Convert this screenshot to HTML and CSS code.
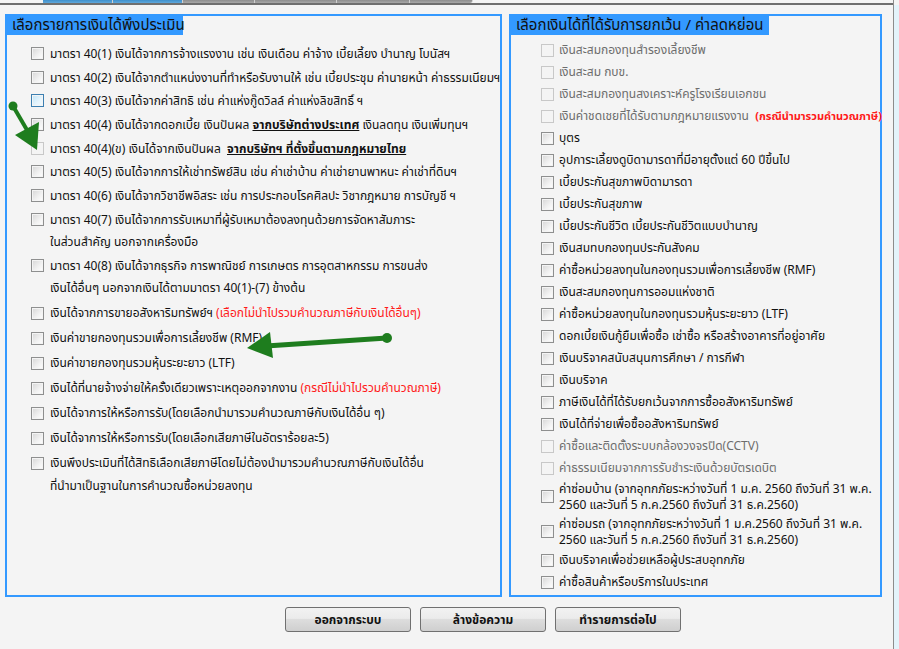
FILE: index.html
```html
<!DOCTYPE html>
<html lang="th">
<head>
<meta charset="utf-8">
<title>เลือกรายการเงินได้</title>
<link rel="stylesheet" href="styles.css">
</head>
<body>
<div class="main">
  <div class="tabbar">
    <span class="tab tab-blue"></span><span class="tab tab-blue"></span>
    <span class="tab tab-gray t1"></span><span class="tab tab-gray t2"></span><span class="tab tab-gray t3"></span><span class="tab tab-gray t4"></span>
  </div>
  <div class="tabline"></div>
  <div class="content">
    <div class="panels">
      <section class="panel panel-left">
        <div class="legend legend-left">เลือกรายการเงินได้พึงประเมิน</div>
        <ul class="list list-left">
          <li class="row"><input type="checkbox" class="cb"><span class="txt">มาตรา 40(1) เงินได้จากการจ้างแรงงาน เช่น เงินเดือน ค่าจ้าง เบี้ยเลี้ยง บำนาญ โบนัสฯ</span></li>
          <li class="row"><input type="checkbox" class="cb"><span class="txt">มาตรา 40(2) เงินได้จากตำแหน่งงานที่ทำหรือรับงานให้ เช่น เบี้ยประชุม ค่านายหน้า ค่าธรรมเนียมฯ</span></li>
          <li class="row"><input type="checkbox" class="cb cb-hover"><span class="txt">มาตรา 40(3) เงินได้จากค่าสิทธิ เช่น ค่าแห่งกู๊ดวิลล์ ค่าแห่งลิขสิทธิ์ ฯ</span></li>
          <li class="row"><input type="checkbox" class="cb"><span class="txt">มาตรา 40(4) เงินได้จากดอกเบี้ย เงินปันผล <b class="em">จากบริษัทต่างประเทศ</b> เงินลดทุน เงินเพิ่มทุนฯ</span></li>
          <li class="row"><input type="checkbox" class="cb cb-dis"><span class="txt">มาตรา 40(4)(ข) เงินได้จากเงินปันผล&nbsp; <b class="em">จากบริษัทฯ ที่ตั้งขึ้นตามกฎหมายไทย</b></span></li>
          <li class="row"><input type="checkbox" class="cb"><span class="txt">มาตรา 40(5) เงินได้จากการให้เช่าทรัพย์สิน เช่น ค่าเช่าบ้าน ค่าเช่ายานพาหนะ ค่าเช่าที่ดินฯ</span></li>
          <li class="row"><input type="checkbox" class="cb"><span class="txt">มาตรา 40(6) เงินได้จากวิชาชีพอิสระ เช่น การประกอบโรคศิลปะ วิชากฎหมาย การบัญชี ฯ</span></li>
          <li class="row"><input type="checkbox" class="cb"><span class="txt">มาตรา 40(7) เงินได้จากการรับเหมาที่ผู้รับเหมาต้องลงทุนด้วยการจัดหาสัมภาระ<br>ในส่วนสำคัญ นอกจากเครื่องมือ</span></li>
          <li class="row"><input type="checkbox" class="cb"><span class="txt">มาตรา 40(8) เงินได้จากธุรกิจ การพาณิชย์ การเกษตร การอุตสาหกรรม การขนส่ง<br>เงินได้อื่นๆ นอกจากเงินได้ตามมาตรา 40(1)-(7) ข้างต้น</span></li>
        </ul>
        <ul class="list list-left2">
          <li class="row"><input type="checkbox" class="cb"><span class="txt">เงินได้จากการขายอสังหาริมทรัพย์ฯ <span class="red">(เลือกไม่นำไปรวมคำนวณภาษีกับเงินได้อื่นๆ)</span></span></li>
          <li class="row"><input type="checkbox" class="cb"><span class="txt">เงินค่าขายกองทุนรวมเพื่อการเลี้ยงชีพ (RMF)</span></li>
          <li class="row"><input type="checkbox" class="cb"><span class="txt">เงินค่าขายกองทุนรวมหุ้นระยะยาว (LTF)</span></li>
          <li class="row"><input type="checkbox" class="cb"><span class="txt">เงินได้ที่นายจ้างจ่ายให้ครั้งเดียวเพราะเหตุออกจากงาน <span class="red">(กรณีไม่นำไปรวมคำนวณภาษี)</span></span></li>
          <li class="row"><input type="checkbox" class="cb"><span class="txt">เงินได้จาการให้หรือการรับ(โดยเลือกนำมารวมคำนวณภาษีกับเงินได้อื่น ๆ)</span></li>
          <li class="row"><input type="checkbox" class="cb"><span class="txt">เงินได้จาการให้หรือการรับ(โดยเลือกเสียภาษีในอัตราร้อยละ5)</span></li>
          <li class="row"><input type="checkbox" class="cb"><span class="txt">เงินพึงประเมินที่ได้สิทธิเลือกเสียภาษีโดยไม่ต้องนำมารวมคำนวณภาษีกับเงินได้อื่น<br>ที่นำมาเป็นฐานในการคำนวณซื้อหน่วยลงทุน</span></li>
        </ul>
      </section>
      <section class="panel panel-right">
        <div class="legend legend-right">เลือกเงินได้ที่ได้รับการยกเว้น / ค่าลดหย่อน</div>
        <ul class="list list-right">
          <li class="rrow dis"><input type="checkbox" class="cb cb-dis" disabled><span class="txt">เงินสะสมกองทุนสำรองเลี้ยงชีพ</span></li>
          <li class="rrow dis"><input type="checkbox" class="cb cb-dis" disabled><span class="txt">เงินสะสม กบข.</span></li>
          <li class="rrow dis"><input type="checkbox" class="cb cb-dis" disabled><span class="txt">เงินสะสมกองทุนสงเคราะห์ครูโรงเรียนเอกชน</span></li>
          <li class="rrow dis"><input type="checkbox" class="cb cb-dis" disabled><span class="txt">เงินค่าชดเชยที่ได้รับตามกฎหมายแรงงาน&nbsp; <span class="red strong">(กรณีนำมารวมคำนวณภาษี)</span></span></li>
          <li class="rrow"><input type="checkbox" class="cb"><span class="txt">บุตร</span></li>
          <li class="rrow"><input type="checkbox" class="cb"><span class="txt">อุปการะเลี้ยงดูบิดามารดาที่มีอายุตั้งแต่ 60 ปีขึ้นไป</span></li>
          <li class="rrow"><input type="checkbox" class="cb"><span class="txt">เบี้ยประกันสุขภาพบิดามารดา</span></li>
          <li class="rrow"><input type="checkbox" class="cb"><span class="txt">เบี้ยประกันสุขภาพ</span></li>
          <li class="rrow"><input type="checkbox" class="cb"><span class="txt">เบี้ยประกันชีวิต เบี้ยประกันชีวิตแบบบำนาญ</span></li>
          <li class="rrow"><input type="checkbox" class="cb"><span class="txt">เงินสมทบกองทุนประกันสังคม</span></li>
          <li class="rrow"><input type="checkbox" class="cb"><span class="txt">ค่าซื้อหน่วยลงทุนในกองทุนรวมเพื่อการเลี้ยงชีพ (RMF)</span></li>
          <li class="rrow"><input type="checkbox" class="cb"><span class="txt">เงินสะสมกองทุนการออมแห่งชาติ</span></li>
          <li class="rrow"><input type="checkbox" class="cb"><span class="txt">ค่าซื้อหน่วยลงทุนในกองทุนรวมหุ้นระยะยาว (LTF)</span></li>
          <li class="rrow"><input type="checkbox" class="cb"><span class="txt">ดอกเบี้ยเงินกู้ยืมเพื่อซื้อ เช่าซื้อ หรือสร้างอาคารที่อยู่อาศัย</span></li>
          <li class="rrow"><input type="checkbox" class="cb"><span class="txt">เงินบริจาคสนับสนุนการศึกษา / การกีฬา</span></li>
          <li class="rrow"><input type="checkbox" class="cb"><span class="txt">เงินบริจาค</span></li>
          <li class="rrow"><input type="checkbox" class="cb"><span class="txt">ภาษีเงินได้ที่ได้รับยกเว้นจากการซื้ออสังหาริมทรัพย์</span></li>
          <li class="rrow"><input type="checkbox" class="cb"><span class="txt">เงินได้ที่จ่ายเพื่อซื้ออสังหาริมทรัพย์</span></li>
          <li class="rrow dis"><input type="checkbox" class="cb cb-dis" disabled><span class="txt">ค่าซื้อและติดตั้งระบบกล้องวงจรปิด(CCTV)</span></li>
          <li class="rrow dis"><input type="checkbox" class="cb cb-dis" disabled><span class="txt">ค่าธรรมเนียมจากการรับชำระเงินด้วยบัตรเดบิต</span></li>
          <li class="rrow two"><input type="checkbox" class="cb"><span class="txt">ค่าซ่อมบ้าน (จากอุทกภัยระหว่างวันที่ 1 ม.ค. 2560 ถึงวันที่ 31 พ.ค.<br>2560 และวันที่ 5 ก.ค.2560 ถึงวันที่ 31 ธ.ค.2560)</span></li>
          <li class="rrow two"><input type="checkbox" class="cb"><span class="txt">ค่าซ่อมรถ (จากอุทกภัยระหว่างวันที่ 1 ม.ค.2560 ถึงวันที่ 31 พ.ค.<br>2560 และวันที่ 5 ก.ค.2560 ถึงวันที่ 31 ธ.ค.2560)</span></li>
          <li class="rrow"><input type="checkbox" class="cb"><span class="txt">เงินบริจาคเพื่อช่วยเหลือผู้ประสบอุทกภัย</span></li>
          <li class="rrow"><input type="checkbox" class="cb"><span class="txt">ค่าซื้อสินค้าหรือบริการในประเทศ</span></li>
        </ul>
      </section>
    </div>
    <div class="buttons">
      <button class="btn">ออกจากระบบ</button>
      <button class="btn">ล้างข้อความ</button>
      <button class="btn">ทำรายการต่อไป</button>
    </div>
  </div>
</div>
<div class="side"></div>

<svg class="arrows" width="899" height="649" viewBox="0 0 899 649" aria-hidden="true">
  <g fill="#1e7d1e" stroke="#1e7d1e">
    <circle cx="13" cy="106" r="4.5" stroke="none"/>
    <line x1="13" y1="106" x2="27" y2="130" stroke-width="4"/>
    <polygon points="15,135 39,122 37,150" stroke="none"/>
    <circle cx="387" cy="338" r="5" stroke="none"/>
    <line x1="387" y1="338" x2="266" y2="346" stroke-width="5"/>
    <polygon points="270,332 273,358 247,348" stroke="none"/>
  </g>
</svg>
</body>
</html>
```

FILE: styles.css
```css
* { box-sizing: border-box; }
html, body { margin: 0; padding: 0; }
body {
  width: 899px;
  height: 649px;
  overflow: hidden;
  display: flex;
  background: #f4f4f4;
  font-family: Tahoma, "Noto Sans Thai", "Noto Sans Thai UI", "Leelawadee UI", "Liberation Sans", sans-serif;
  font-size: 12px;
  color: #111;
  position: relative;
}
.main {
  width: 894px;
  border-right: 1px solid #8c8c8c;
  background: #f4f4f4;
}
.side {
  flex: 1;
  background: #e3f3fa;
  border-top: 5px solid #f4f4f4;
}
.tabbar {
  height: 3px;
  display: flex;
  padding-left: 43px;
}
.tab { height: 3px; border-right: 1px solid #d0d0d0; }
.tab-blue { width: 70px; background: linear-gradient(#3d8fcc, #5fa8db); }
.tab-gray { background: linear-gradient(#8d8d8d, #a8a8a8); }
.t1 { width: 72px; }
.t2 { width: 82px; }
.t3 { width: 73px; }
.t4 { width: 63px; border-radius: 0 0 3px 0; }
.tabline { height: 2px; background: #6f6f6f; }
.content { padding-top: 9px; }
.panels {
  display: flex;
  gap: 7px;
  padding-left: 5px;
}
.panel {
  height: 583px;
  border: 2px solid #3399ff;
  background: #f4f4f4;
}
.panel-left { width: 497px; }
.panel-right { width: 373px; }
.legend {
  height: 19px;
  line-height: 19px;
  background: #3399ff;
  color: #111;
  font-size: 15px;
  padding-left: 5px;
  white-space: nowrap;
}
.legend-left { width: 176px; }
.legend-right { width: 258px; }
.list { list-style: none; margin: 0; padding: 0; }
.list-left { padding: 7px 0 0 24px; }
.list-left2 { padding: 2px 0 0 24px; }
.row {
  display: flex;
  align-items: flex-start;
  padding: 1px 0 0.7px;
  line-height: 22px;
  white-space: nowrap;
}
.list-left2 .row { padding: 1px 0 1px; line-height: 23px; }
.cb {
  appearance: none;
  -webkit-appearance: none;
  width: 13px;
  height: 13px;
  margin: 4px 6px 0 0;
  flex: none;
  border: 1px solid #8e8f8f;
  background: linear-gradient(135deg, #d6d6d6 0%, #f2f2f2 60%, #ffffff 100%);
  box-shadow: inset 0 0 0 1px #f4f4f4;
}
.cb-hover {
  border-color: #3c7fb1;
  background: linear-gradient(135deg, #bfe4f8 0%, #e6f5fd 60%, #f2fafe 100%);
}
.cb-dis {
  border-color: #c8c8c8;
  background: #f4f4f4;
  box-shadow: none;
}
.list-left2 .cb { margin-top: 5px; }
.em { font-weight: bold; text-decoration: underline; }
.red { color: #ff1a1a; }
.strong { font-weight: bold; font-size: 11px; }
.list-right { padding: 4px 0 0 30px; }
.rrow {
  display: flex;
  align-items: center;
  height: 22px;
  line-height: 22px;
  white-space: nowrap;
}
.rrow .cb { margin: 0 5px 0 0; }
.rrow.two { height: 35px; line-height: 16px; }
.dis .txt { color: #6d6d6d; }
.buttons {
  display: flex;
  gap: 9px;
  padding: 10px 0 0 285px;
}
.btn {
  width: 126px;
  height: 25px;
  border: 1px solid #707070;
  border-radius: 3px;
  background: linear-gradient(#f2f2f2 0%, #ebebeb 45%, #dddddd 50%, #cfcfcf 100%);
  font-family: inherit;
  font-size: 12px;
  font-weight: bold;
  color: #111;
  padding: 0;
}
.arrows {
  position: absolute;
  left: 0;
  top: 0;
  pointer-events: none;
}
```
